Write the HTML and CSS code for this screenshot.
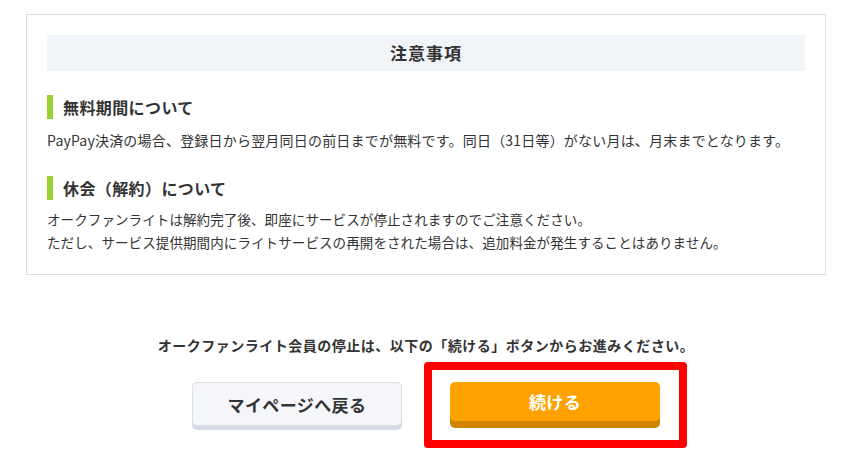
FILE: index.html
```html
<!DOCTYPE html>
<html lang="ja">
<head>
<meta charset="utf-8">
<title>注意事項</title>
<link rel="stylesheet" href="styles.css">
</head>
<body>
<div class="page">
  <section class="notice">
    <h2 class="notice-title">注意事項</h2>
    <h3 class="notice-heading first">無料期間について</h3>
    <p class="notice-text">PayPay決済の場合、登録日から翌月同日の前日までが無料です。同日（31日等）がない月は、月末までとなります。</p>
    <h3 class="notice-heading">休会（解約）について</h3>
    <p class="notice-text tight">オークファンライトは解約完了後、即座にサービスが停止されますのでご注意ください。<br>ただし、サービス提供期間内にライトサービスの再開をされた場合は、追加料金が発生することはありません。</p>
  </section>
  <p class="guide">オークファンライト会員の停止は、以下の「続ける」ボタンからお進みください。</p>
  <div class="actions">
    <a class="btn btn-back" href="#">マイページへ戻る</a>
    <span class="highlight"><a class="btn btn-next" href="#">続ける</a></span>
  </div>
</div>
</body>
</html>
```

FILE: styles.css
```css
* { box-sizing: border-box; }
html, body { margin: 0; padding: 0; background: #fff; }
body {
  font-family: "Noto Sans CJK JP", "Noto Sans", sans-serif;
  color: #333;
  min-height: 474px;
}
.page {
  width: 800px;
  margin-left: 26px;
  padding-top: 14px;
  padding-bottom: 40px;
}
.notice {
  border: 1px solid #dddddd;
  padding: 20px 20px 20px 20px;
}
.notice-title {
  margin: 0;
  height: 36px;
  line-height: 36px;
  background: #f1f4f8;
  text-align: center;
  font-size: 17px;
  font-weight: bold;
  letter-spacing: 1px;
}
.notice-heading {
  margin: 24px 0 0 0;
  height: 24px;
  line-height: 24px;
  border-left: 6px solid #99d232;
  padding-left: 10px;
  font-size: 16px;
  font-weight: bold;
  letter-spacing: 0.4px;
}
.notice-text {
  margin: 10px 0 0 0;
  font-size: 14px;
  line-height: 23px;
  letter-spacing: 0.2px;
}
.notice-text.tight {
  margin-top: 8px;
  font-size: 13.5px;
  letter-spacing: 0.1px;
}
.guide {
  margin: 59px 0 0 0;
  text-align: center;
  font-size: 14px;
  font-weight: bold;
  line-height: 23px;
  letter-spacing: 0.5px;
}
.actions {
  display: flex;
  justify-content: center;
  align-items: flex-start;
  gap: 48px;
  margin-top: 25px;
}
.btn {
  display: flex;
  align-items: center;
  justify-content: center;
  width: 210px;
  border-radius: 5px;
  font-size: 17px;
  font-weight: bold;
  text-decoration: none;
  letter-spacing: 0.4px;
}
.btn-back {
  height: 44px;
  background: #f5f6fa;
  border: 1px solid #dcdfe6;
  color: #333;
  box-shadow: 0 4px 0 #d6dae4;
}
.highlight {
  position: relative;
  display: block;
}
.highlight::after {
  content: "";
  position: absolute;
  left: -26px;
  right: -27px;
  top: -20px;
  bottom: -27px;
  border: 8px solid #ff0000;
  border-radius: 4px;
  pointer-events: none;
}
.btn-next {
  height: 39px;
  background: #ffa200;
  color: #fff;
  box-shadow: 0 7px 0 #cf8500;
}
```
